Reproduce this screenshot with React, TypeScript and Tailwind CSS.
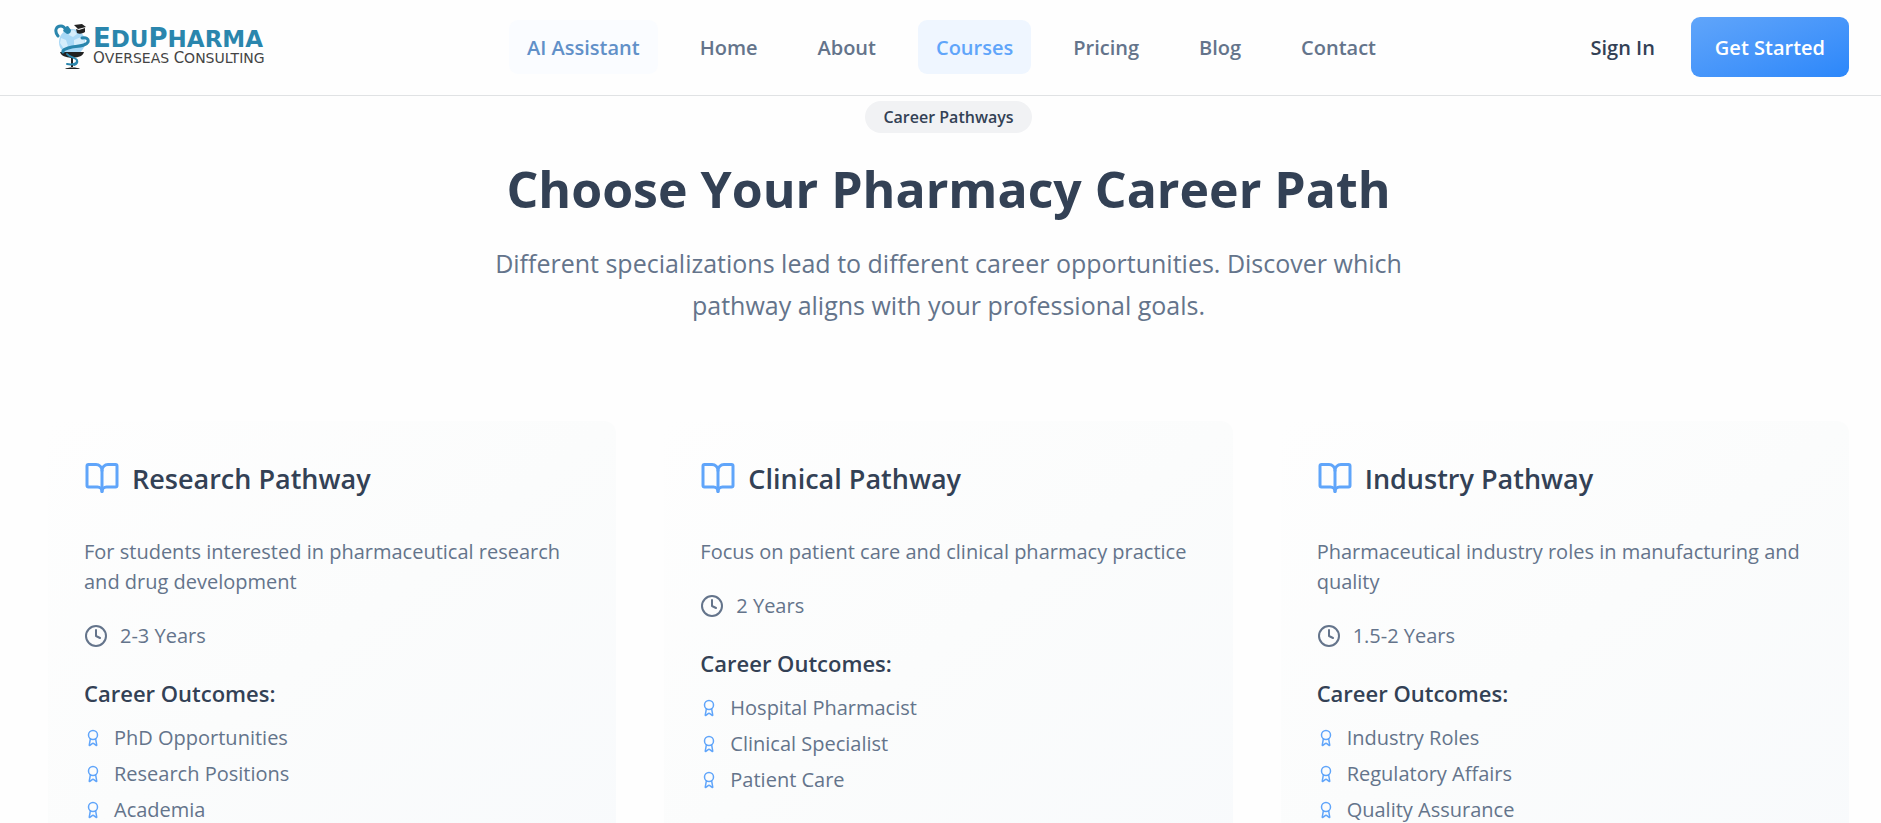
import { Award, BookOpen, Clock } from "lucide-react";
import clsx from "clsx";

interface Pathway {
  title: string;
  description: string;
  duration: string;
  outcomes: string[];
}

const navLinks = [
  { label: "AI Assistant", variant: "soft" },
  { label: "Home" },
  { label: "About" },
  { label: "Courses", variant: "active" },
  { label: "Pricing" },
  { label: "Blog" },
  { label: "Contact" },
];

const pathways: Pathway[] = [
  {
    title: "Research Pathway",
    description:
      "For students interested in pharmaceutical research and drug development",
    duration: "2-3 Years",
    outcomes: ["PhD Opportunities", "Research Positions", "Academia"],
  },
  {
    title: "Clinical Pathway",
    description: "Focus on patient care and clinical pharmacy practice",
    duration: "2 Years",
    outcomes: ["Hospital Pharmacist", "Clinical Specialist", "Patient Care"],
  },
  {
    title: "Industry Pathway",
    description: "Pharmaceutical industry roles in manufacturing and quality",
    duration: "1.5-2 Years",
    outcomes: ["Industry Roles", "Regulatory Affairs", "Quality Assurance"],
  },
];

const LogoMark = () => (
  <svg
    viewBox="0 0 36 48"
    className="w-9 h-12 shrink-0"
    fill="none"
    aria-hidden="true"
  >
    <circle cx="18" cy="19" r="13" fill="#a9d8f6" />
    <path
      d="M15 8l5-1 3 4-4 3-4-2zM20 17l7-3 4 5-5 5-6-2zM7 15l5 2 2 6-4 3-4-6z"
      fill="#d6edfb"
    />
    <path d="M6 29h24c-1 4-5 5-11 6v9h-2v-9c-5-1-10-2-11-6z" fill="#222" />
    <path d="M11 46c2-2 13-2 15 0z" fill="#222" />
    <path
      d="M4 13C0 8 2 3 7 3c3 0 4 2 5 4M28 15c4-1 7 1 6 4-2 4-9 4-16 5-5 1-10 3-9 5"
      stroke="#2a86ad"
      strokeWidth="3"
      strokeLinecap="round"
    />
    <path
      d="M13 31c3 4 10 3 10 7 0 3-5 4-10 3M20 42c3-1 4-2 3-5"
      stroke="#2a86ad"
      strokeWidth="2"
      strokeLinecap="round"
    />
    <path d="M9 8c1-3 3-5 5-5l3 4c0 3-2 4-4 4z" fill="#2a86ad" />
    <path d="M20 2l8-1 4 3-8 2zM22 6l3 1 6-2v4c-3 2-6 2-8 1z" fill="#222" />
  </svg>
);

const Logo = () => (
  <a href="#" className="flex items-center gap-[3px]">
    <LogoMark />
    <span className="flex flex-col whitespace-nowrap font-['DejaVu_Sans',sans-serif]">
      <span className="font-bold text-[#2a86ad] text-[23px] leading-5">
        <span className="text-[26px] leading-5">E</span>DU
        <span className="text-[26px] leading-5">P</span>HARMA
      </span>
      <span className="text-[#444] text-[14px] leading-[18px]">
        <span className="text-[15px] leading-[18px]">O</span>VERSEAS{" "}
        <span className="text-[15px] leading-[18px]">C</span>ONSULTING
      </span>
    </span>
  </a>
);

const Navbar = () => (
  <header className="flex items-center pt-[17px] pb-[18px] pl-12 pr-8 border-b border-[#e0e2e4]">
    <div className="flex flex-1 pl-[6px]">
      <Logo />
    </div>
    <nav className="flex items-center gap-6 text-xl leading-[30px] font-semibold">
      {navLinks.map(({ label, variant }) => (
        <a
          key={label}
          href="#"
          className={clsx(
            "px-[18px] pt-[13px] pb-[11px] rounded-[9px]",
            variant === "active" && "bg-[#eff6ff] text-[#60a5fa]",
            variant === "soft" && "bg-[#fafcff] text-[#6190c8]",
            !variant && "text-[#64748b]",
          )}
        >
          {label}
        </a>
      ))}
    </nav>
    <div className="flex flex-1 items-center justify-end gap-9 text-xl leading-[30px] font-semibold">
      <a href="#" className="pt-[13px] pb-[11px] text-[#334155]">
        Sign In
      </a>
      <button
        type="button"
        className="px-6 pt-4 pb-[14px] rounded-[9px] text-white bg-linear-to-br from-[#60a5fa] to-[#2b87fa] cursor-pointer"
      >
        Get Started
      </button>
    </div>
  </header>
);

const PathwayCard = ({ title, description, duration, outcomes }: Pathway) => (
  <article className="p-9 rounded-xl bg-linear-to-br from-[#fefefe] via-[#fbfcfc] to-[#f8fafc] text-[#64748b] text-xl leading-[30px]">
    <div className="flex items-center gap-3">
      <BookOpen className="size-9 text-[#60a5fa]" />
      <h3 className="pt-[2px] text-[27px] leading-10 font-semibold text-[#334155]">
        {title}
      </h3>
    </div>
    <p className="mt-[38px]">{description}</p>
    <div className="flex items-center gap-3 mt-6">
      <Clock className="size-6" />
      <span>{duration}</span>
    </div>
    <h4 className="mt-6 text-[22px] leading-9 font-semibold text-[#334155]">
      Career Outcomes:
    </h4>
    <ul className="flex flex-col gap-[6px] mt-3">
      {outcomes.map((outcome) => (
        <li key={outcome} className="flex items-center gap-3">
          <Award className="size-[18px] text-[#60a5fa]" />
          {outcome}
        </li>
      ))}
    </ul>
  </article>
);

export default function App() {
  return (
    <div className="h-screen overflow-hidden bg-[#fefefe] font-['Open_Sans',sans-serif]">
      <Navbar />
      <main className="pl-12 pr-8 pt-[5px]">
        <div className="flex flex-col items-center text-center">
          <span className="px-[18px] py-1 rounded-full bg-[#f1f2f4] text-base leading-6 font-semibold text-[#334155]">
            Career Pathways
          </span>
          <h2 className="mt-[26px] text-[50px] leading-[60px] font-bold text-[#334155]">
            Choose Your Pharmacy Career Path
          </h2>
          <p className="mt-[23px] max-w-[960px] text-[25px] leading-[42px] text-[#64748b]">
            Different specializations lead to different career opportunities.
            Discover which pathway aligns with your professional goals.
          </p>
        </div>
        <div className="grid grid-cols-3 gap-12 mt-[95px]">
          {pathways.map((pathway) => (
            <PathwayCard key={pathway.title} {...pathway} />
          ))}
        </div>
      </main>
    </div>
  );
}
